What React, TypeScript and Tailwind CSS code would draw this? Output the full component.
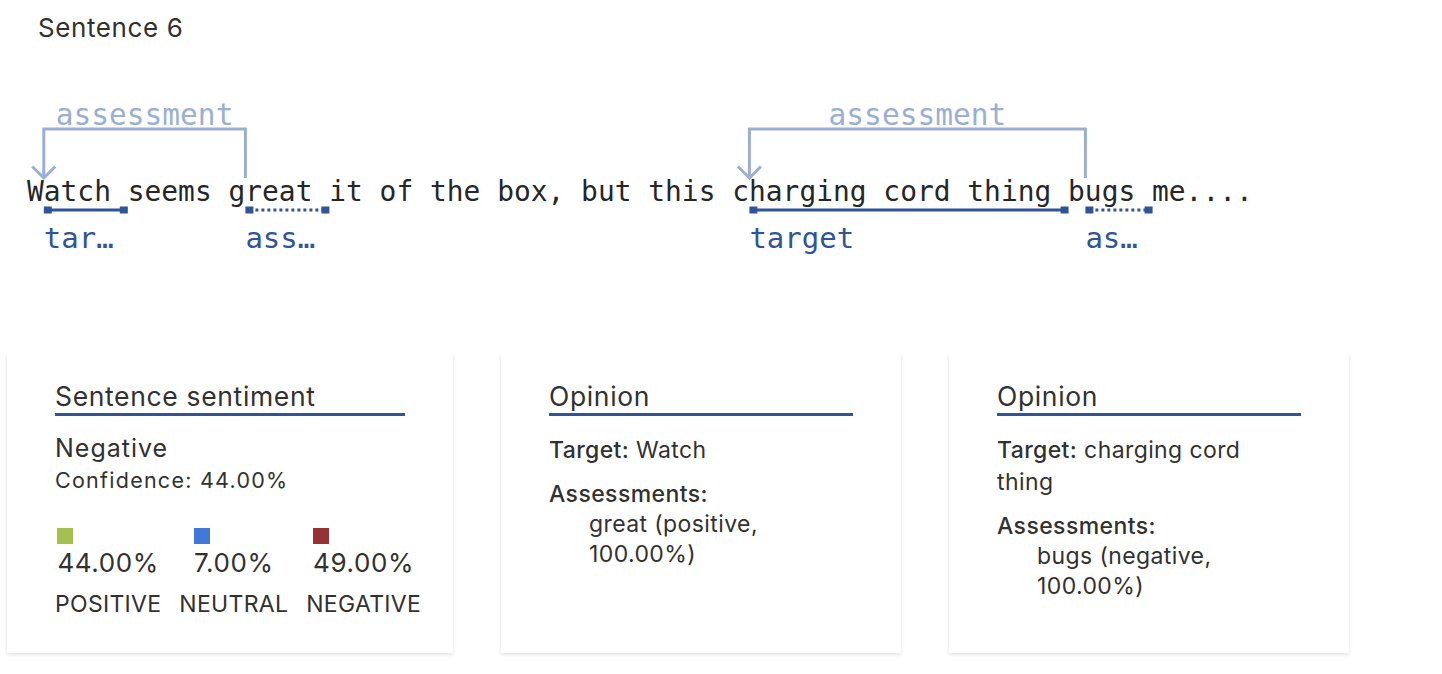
import React from "react";

const CW = 16.8;
const X0 = 27;
const SENTENCE = "Watch seems great it of the box, but this charging cord thing bugs me....";

type Span = { start: number; end: number; label: string; dotted: boolean };

const spans: Span[] = [
  { start: 0, end: 5, label: "tar…", dotted: false },
  { start: 12, end: 17, label: "ass…", dotted: true },
  { start: 42, end: 61, label: "target", dotted: false },
  { start: 62, end: 66, label: "as…", dotted: true },
];

// pairs of [target span, assessment span]
const arcs: [number, number][] = [
  [0, 1],
  [2, 3],
];

const sx1 = (s: Span) => X0 + (s.start + 1) * CW;
const sx2 = (s: Span) => X0 + (s.end + 1) * CW;

function Diagram() {
  const mono = "'DejaVu Sans Mono', 'Liberation Mono', monospace";
  return (
    <svg width="1300" height="273" className="block" fontFamily={mono}>
      {arcs.map(([a, b], i) => {
        const l = sx1(spans[a]);
        const r = sx1(spans[b]);
        return (
          <g key={i} stroke="#9aafd3" strokeWidth="3" fill="none">
            <path d={`M${r} 98 V49 H${l} V97`} />
            <path d={`M${l - 11.5} 86.5 L${l} 98 L${l + 11.5} 86.5`} />
            <text
              x={(l + r) / 2}
              y={45}
              textAnchor="middle"
              fontSize="29.5"
              fill="#9aafd3"
              stroke="none"
            >
              assessment
            </text>
          </g>
        );
      })}
      <text x={X0} y={121} fontSize="27.9" fill="#262626" xmlSpace="preserve">
        {SENTENCE}
      </text>
      {spans.map((s, i) => {
        const x1 = sx1(s);
        const x2 = sx2(s);
        return (
          <g key={i} fill="#2f5597">
            <line
              x1={x1 + 4}
              x2={x2 - 4}
              y1={130}
              y2={130}
              stroke="#2f5597"
              strokeWidth="3"
              strokeDasharray={s.dotted ? "3 3" : undefined}
            />
            <rect x={x1} y={126.5} width="8" height="7" />
            <rect x={x2 - 8} y={126.5} width="8" height="7" />
            <text x={x1} y={168} fontSize="29">
              {s.label}
            </text>
          </g>
        );
      })}
    </svg>
  );
}

function Title({ children }: { children: React.ReactNode }) {
  return (
    <div className="text-[26.5px] leading-[30px] tracking-[0.65px] pb-[2px] border-b-[3px] border-[#2f5597]">
      {children}
    </div>
  );
}

function Legend({ color, pct, label }: { color: string; pct: string; label: string }) {
  return (
    <div className="flex flex-col items-center">
      <div className="flex flex-col items-start">
        <div className={`w-4 h-4 ${color}`} />
        <div className="mt-[3px] text-[26px] leading-[32px] tracking-[0.6px]">{pct}</div>
      </div>
      <div className="mt-[11px] text-[23px] leading-[28px] tracking-[0.3px]">{label}</div>
    </div>
  );
}

function SentimentCard() {
  return (
    <div className="w-[446px] h-[300px] shrink-0 bg-white px-[48px] pt-[28px] shadow-[0_1.6px_3.6px_0_rgba(0,0,0,0.13),0_0.3px_0.9px_0_rgba(0,0,0,0.11)]">
      <Title>Sentence sentiment</Title>
      <div className="mt-[17px] text-[25px] leading-[30px] tracking-[1px]">Negative</div>
      <div className="mt-[4px] text-[21.5px] leading-[26px] tracking-[1.25px]">Confidence: 44.00%</div>
      <div className="mt-[35px] flex gap-[18px] whitespace-nowrap">
        <Legend color="bg-[#a2c150]" pct="44.00%" label="POSITIVE" />
        <Legend color="bg-[#3f78d6]" pct="7.00%" label="NEUTRAL" />
        <Legend color="bg-[#983232]" pct="49.00%" label="NEGATIVE" />
      </div>
    </div>
  );
}

function OpinionCard({ target, assessment }: { target: React.ReactNode; assessment: React.ReactNode }) {
  return (
    <div className="w-[400px] h-[300px] shrink-0 bg-white px-[48px] pt-[28px] shadow-[0_1.6px_3.6px_0_rgba(0,0,0,0.13),0_0.3px_0.9px_0_rgba(0,0,0,0.11)]">
      <Title>Opinion</Title>
      <div className="mt-[18px] text-[23px] leading-[32px] tracking-[0.4px]">
        <span className="font-medium">Target:</span> {target}
      </div>
      <div className="mt-[13px] text-[23px] leading-[30px] tracking-[0.4px]">
        <div className="font-medium">Assessments:</div>
        <ul className="pl-[40px]">
          <li>{assessment}</li>
        </ul>
      </div>
    </div>
  );
}

export default function App() {
  return (
    <div
      className="min-h-[674px] w-full bg-white text-[#323130]"
      style={{ fontFamily: "Inter, 'Noto Sans', sans-serif" }}
    >
      <div className="h-[80px] px-[38px] pt-[13px] text-[26px] leading-[30px] tracking-[0.6px]">Sentence 6</div>
      <Diagram />
      <div className="flex gap-[48px] pl-[7px]">
        <SentimentCard />
        <OpinionCard
          target="Watch"
          assessment={
            <>
              great (positive,
              <br />
              100.00%)
            </>
          }
        />
        <OpinionCard
          target={
            <>
              charging cord
              <br />
              thing
            </>
          }
          assessment={
            <>
              bugs (negative,
              <br />
              100.00%)
            </>
          }
        />
      </div>
    </div>
  );
}
